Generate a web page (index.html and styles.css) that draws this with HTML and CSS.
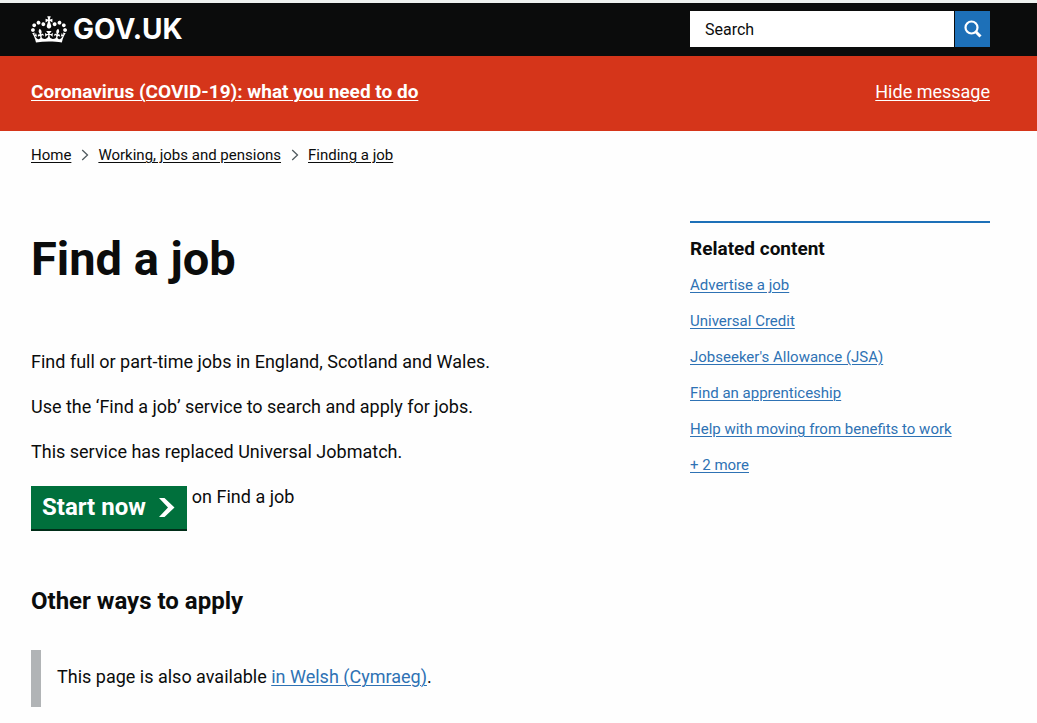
FILE: index.html
```html
<!DOCTYPE html>
<html lang="en">
<head>
<meta charset="utf-8">
<meta name="viewport" content="width=device-width, initial-scale=1">
<title>Find a job - GOV.UK</title>
<link rel="stylesheet" href="styles.css">
</head>
<body>
<header class="header">
  <div class="container header-row">
    <a class="logo" href="#">
      <svg class="crown" viewBox="0 0 132 97" width="36" height="27" aria-hidden="true"><path fill="currentColor" d="M25 30.2c3.5 1.5 7.7-.2 9.1-3.7 1.5-3.6-.2-7.8-3.9-9.2-3.6-1.4-7.6.3-9.1 3.9-1.4 3.5.3 7.5 3.9 9zM9 39.5c3.6 1.5 7.8-.2 9.2-3.7 1.5-3.6-.2-7.8-3.9-9.1-3.6-1.5-7.6.2-9.1 3.8-1.4 3.5.3 7.5 3.8 9zM4.4 57.2c3.5 1.5 7.7-.2 9.1-3.8 1.5-3.6-.2-7.7-3.9-9.1-3.5-1.5-7.6.3-9.1 3.8-1.4 3.5.3 7.6 3.9 9.1zm38.3-21.4c3.5 1.5 7.7-.2 9.1-3.8 1.5-3.6-.2-7.7-3.9-9.1-3.6-1.5-7.6.3-9.1 3.8-1.3 3.6.4 7.7 3.9 9.1zm64.4-5.6c-3.6 1.5-7.8-.2-9.1-3.7-1.5-3.6.2-7.8 3.8-9.2 3.6-1.4 7.7.3 9.2 3.9 1.3 3.5-.4 7.5-3.9 9zm15.9 9.3c-3.6 1.5-7.7-.2-9.1-3.7-1.5-3.6.2-7.8 3.7-9.1 3.6-1.5 7.7.2 9.2 3.8 1.5 3.5-.3 7.5-3.8 9zm4.7 17.7c-3.6 1.5-7.8-.2-9.2-3.8-1.5-3.6.2-7.7 3.9-9.1 3.6-1.5 7.7.3 9.2 3.8 1.3 3.5-.4 7.6-3.9 9.1zM89.3 35.8c-3.6 1.5-7.8-.2-9.2-3.8-1.4-3.6.2-7.7 3.9-9.1 3.6-1.5 7.7.3 9.2 3.8 1.4 3.6-.3 7.7-3.9 9.1zM69.7 17.7l8.9 4.7V9.3l-8.9 2.8c-.2-.3-.5-.6-.9-.9L72.4 0H59.6l3.5 11.2c-.3.3-.6.5-.9.9l-8.8-2.8v13.1l8.8-4.7c.3.3.6.7.9.9l-5 15.4v.1c-.2.8-.4 1.6-.4 2.4 0 4.1 3.1 7.5 7 8.1h.2c.3 0 .7.1 1 .1.4 0 .7 0 1-.1h.2c4-.6 7.1-4.1 7.1-8.1 0-.8-.1-1.7-.4-2.4V34l-5.1-15.4c.4-.2.7-.6 1-.9zM66 92.8c16.9 0 32.8 1.1 47.1 3.2 4-16.9 8.9-26.7 14-33.5l-9.6-3.4c1 4.9 1.1 7.2 0 10.2-1.5-1.4-3-4.3-4.2-8.7L108.6 76c2.8-2 5-3.2 7.5-3.3-4.4 9.4-10 11.9-13.6 11.2-4.3-.8-6.3-4.6-5.6-7.9 1-4.7 5.7-5.9 8-.5 4.3-8.7-3-11.4-7.6-8.8 7.1-7.2 7.9-13.5 2.1-21.1-8 6.1-8.1 12.3-4.5 20.8-4.7-5.4-12.1-2.5-9.5 6.2 3.4-5.2 7.9-2 7.2 3.1-.6 4.3-6.4 7.8-13.5 7.2-10.3-.9-10.9-8-11.2-13.8 2.5-.5 7.1 1.8 11 7.3L80.2 60c-4.1 4.4-8 5.3-12.3 5.4 1.4-4.4 8-11.6 8-11.6H55.5s6.4 7.2 7.9 11.6c-4.2-.1-8-1-12.3-5.4l1.4 16.4c3.9-5.5 8.5-7.7 10.9-7.3-.3 5.8-.9 12.8-11.1 13.8-7.2.6-12.9-2.9-13.5-7.2-.7-5 3.8-8.3 7.1-3.1 2.7-8.7-4.6-11.6-9.4-6.2 3.7-8.5 3.6-14.7-4.6-20.8-5.8 7.6-5 13.9 2.2 21.1-4.7-2.6-11.9.1-7.7 8.8 2.3-5.5 7.1-4.2 8.1.5.7 3.3-1.3 7.1-5.7 7.9-3.5.7-9-1.8-13.5-11.2 2.5.1 4.7 1.3 7.5 3.3l-4.7-15.4c-1.2 4.4-2.7 7.2-4.3 8.7-1.1-3-.9-5.3 0-10.2l-9.5 3.4c5 6.9 9.9 16.7 14 33.5 14.8-2.1 30.8-3.2 47.7-3.2z"/></svg>
      <span>GOV.UK</span>
    </a>
    <form class="search" role="search">
      <input class="search-input" type="text" placeholder="Search" aria-label="Search">
      <button class="search-button" type="button" aria-label="Search GOV.UK">
        <svg viewBox="0 0 18 18" width="18" height="18" fill="none" stroke="currentColor" aria-hidden="true"><circle cx="7.5" cy="7.5" r="6" stroke-width="2.2"/><path d="M11.8 11.8l4.7 4.7" stroke-width="3"/></svg>
      </button>
    </form>
  </div>
</header>
<section class="banner" aria-label="Coronavirus">
  <div class="container banner-row">
    <a class="banner-title" href="#">Coronavirus (COVID-19): what you need to do</a>
    <a href="#">Hide message</a>
  </div>
</section>
<div class="container">
  <nav aria-label="Breadcrumb">
    <ol class="breadcrumbs">
      <li><a href="#">Home</a></li>
      <li><svg class="chevron" viewBox="0 0 8 12" width="8" height="12" aria-hidden="true"><path d="M1.2 1l5.3 5-5.3 5" fill="none" stroke="currentColor" stroke-width="1.3"/></svg><a href="#">Working, jobs and pensions</a></li>
      <li><svg class="chevron" viewBox="0 0 8 12" width="8" height="12" aria-hidden="true"><path d="M1.2 1l5.3 5-5.3 5" fill="none" stroke="currentColor" stroke-width="1.3"/></svg><a href="#">Finding a job</a></li>
    </ol>
  </nav>
  <div class="columns">
    <main class="main">
      <h1>Find a job</h1>
      <p>Find full or part-time jobs in England, Scotland and Wales.</p>
      <p>Use the ‘Find a job’ service to search and apply for jobs.</p>
      <p>This service has replaced Universal Jobmatch.</p>
      <div class="start">
        <a class="start-button" href="#" role="button">Start now
          <svg viewBox="0 0 16 19" width="16" height="19" aria-hidden="true"><path fill="currentColor" d="M0 0h5.5L15.500 9.500 5.500 19H0l9-9.500z"/></svg></a>
        <span>on Find a job</span>
      </div>
      <h2>Other ways to apply</h2>
      <div class="inset">This page is also available <a href="#">in Welsh (Cymraeg)</a>.</div>
    </main>
    <aside class="related">
      <h2>Related content</h2>
      <ul>
        <li><a href="#">Advertise a job</a></li>
        <li><a href="#">Universal Credit</a></li>
        <li><a href="#">Jobseeker's Allowance (JSA)</a></li>
        <li><a href="#">Find an apprenticeship</a></li>
        <li><a href="#">Help with moving from benefits to work</a></li>
        <li><a href="#">+ 2 more</a></li>
      </ul>
    </aside>
  </div>
</div>
</body>
</html>
```
FILE: styles.css
```css
* { box-sizing: border-box; }
body {
  margin: 0;
  background: #fefefe;
  color: #0b0c0c;
  font: 18px/25px Roboto, "Noto Sans", sans-serif;
}
a { color: #2e72b4; text-underline-offset: 2px; text-decoration-thickness: 1px; }
.container { max-width: 1037px; margin: 0 auto; padding: 0 47px 0 31px; }

.header { background: #0b0c0c; border-top: 3px solid #eef2f0; }
.header-row { display: flex; justify-content: space-between; align-items: center; padding-top: 8px; padding-bottom: 9px; }
.logo { display: flex; align-items: center; gap: 6px; color: #fff; font: bold 28px/36px Inter, sans-serif; text-decoration: none; }
.search { display: flex; gap: 1px; width: 300px; }
.search-input { flex: 1; min-width: 0; height: 36px; border: 0; border-radius: 0; padding: 0 15px; background: #fff; color: #0b0c0c; font: 16px Roboto, sans-serif; }
.search-input::placeholder { color: #0b0c0c; opacity: 1; }
.search-button { display: flex; align-items: center; justify-content: center; width: 35px; height: 36px; padding: 0; border: 0; background: #1d70b8; color: #fff; }

.banner { background: #d5351a; }
.banner-row { display: flex; justify-content: space-between; padding-top: 23px; padding-bottom: 27px; }
.banner a { color: #fff; }
.banner-title { font-size: 19px; font-weight: bold; }

.breadcrumbs { display: flex; flex-wrap: wrap; gap: 10px; margin: 0; padding: 14px 0 0; list-style: none; font-size: 15px; line-height: 20px; }
.breadcrumbs li { display: flex; align-items: center; gap: 9px; }
.breadcrumbs a { color: #0b0c0c; }
.chevron { color: #505a5f; }

.columns { display: grid; grid-template-columns: minmax(0, 1fr) 300px; gap: 30px; padding-top: 56px; }
h1 { margin: 13px 0 65px; font-size: 47px; line-height: 50px; }
p { margin: 0 0 20px; }
.start { display: flex; align-items: flex-start; gap: 5px; }
.start-button { display: flex; align-items: center; gap: 13px; margin-top: 2px; padding: 7px 12px 9px 11px; background: #00703c; box-shadow: inset 0 -2px 0 #002d18; color: #fff; font-size: 24px; font-weight: bold; line-height: 29px; text-decoration: none; }
.main h2 { margin: 55px 0 34px; font-size: 24px; line-height: 30px; }
.inset { padding: 14px 0 18px 16px; border-left: 10px solid #b1b4b6; }

.related { align-self: start; border-top: 2px solid #1d70b8; }
.related h2 { margin: 13px 0 14px; font-size: 19px; line-height: 25px; }
.related ul { display: grid; gap: 15px; margin: 0; padding: 0; list-style: none; font-size: 15px; line-height: 21px; }
```
